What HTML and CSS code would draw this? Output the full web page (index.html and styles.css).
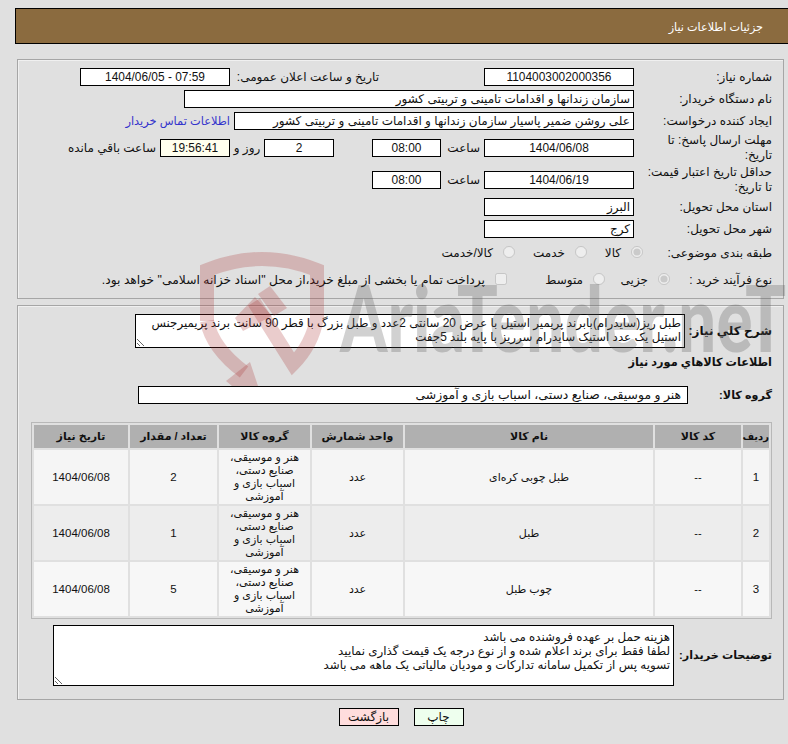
FILE: index.html
```html
<!DOCTYPE html>
<html lang="fa" dir="rtl">
<head>
<meta charset="utf-8">
<title>جزئیات اطلاعات نیاز</title>
<link rel="stylesheet" href="styles.css">
</head>
<body>
<header class="title-bar">جزئیات اطلاعات نیاز</header>

<section class="panel panel-top">
  <div class="row">
    <span class="label">شماره نیاز:</span>
    <span class="box w150 center">1104003002000356</span>
    <span class="label-public">تاریخ و ساعت اعلان عمومی:</span>
    <span class="box w150 center ltr">1404/06/05 - 07:59</span>
  </div>
  <div class="row">
    <span class="label">نام دستگاه خریدار:</span>
    <span class="box w450">سازمان زندانها و اقدامات تامینی و تربیتی کشور</span>
  </div>
  <div class="row">
    <span class="label">ایجاد کننده درخواست:</span>
    <span class="box w400">علی روشن ضمیر پاسیار سازمان زندانها و اقدامات تامینی و تربیتی کشور</span>
    <a class="contact" href="#">اطلاعات تماس خریدار</a>
  </div>
  <div class="row tall">
    <span class="label">مهلت ارسال پاسخ: تا تاریخ:</span>
    <span class="box w150 center">1404/06/08</span>
    <span class="hour">ساعت</span>
    <span class="box w69 center">08:00</span>
    <span class="spacer"></span>
    <span class="box w70 center">2</span>
    <span class="days">روز و</span>
    <span class="box w70 center timer">19:56:41</span>
    <span class="left-note">ساعت باقي مانده</span>
  </div>
  <div class="row tall">
    <span class="label">حداقل تاریخ اعتبار قیمت: تا تاریخ:</span>
    <span class="box w150 center">1404/06/19</span>
    <span class="hour">ساعت</span>
    <span class="box w69 center">08:00</span>
  </div>
  <div class="row">
    <span class="label">استان محل تحویل:</span>
    <span class="box w150">البرز</span>
  </div>
  <div class="row">
    <span class="label">شهر محل تحویل:</span>
    <span class="box w150">کرج</span>
  </div>
  <div class="row choice choice-subject">
    <span class="label">طبقه بندی موضوعی:</span>
    <label class="opt opt-goods"><input type="radio" name="subject" checked disabled><span>کالا</span></label>
    <label class="opt opt-service"><input type="radio" name="subject" disabled><span>خدمت</span></label>
    <label class="opt"><input type="radio" name="subject" disabled><span>کالا/خدمت</span></label>
  </div>
  <div class="row choice choice-process">
    <span class="label">نوع فرآیند خرید :</span>
    <label class="opt opt-minor"><input type="radio" name="process" checked disabled><span>جزیی</span></label>
    <label class="opt opt-medium"><input type="radio" name="process" disabled><span>متوسط</span></label>
    <label class="opt"><input type="checkbox" disabled><span class="pay-note">پرداخت تمام یا بخشی از مبلغ خرید،از محل "اسناد خزانه اسلامی" خواهد بود.</span></label>
  </div>
</section>

<section class="panel panel-bottom">
  <div class="row desc-row">
    <span class="label strong">شرح کلي نیاز:</span>
    <textarea class="area area-desc" readonly>طبل ریز(سایدرام)بابرند پریمیر استیل با عرض 20 سانتی 2عدد و طبل بزرگ با قطر 90 سانت برند پریمیرجنس استیل یک عدد استیک سایدرام سرریز با پایه بلند 5جفت</textarea>
  </div>
  <h2 class="goods-title">اطلاعات کالاهاي مورد نیاز</h2>
  <div class="row group-row">
    <span class="label strong">گروه کالا:</span>
    <span class="box w550">هنر و موسیقی، صنایع دستی، اسباب بازی و آموزشی</span>
  </div>
  <table class="goods">
    <colgroup>
      <col class="c-row"><col class="c-code"><col class="c-name"><col class="c-unit"><col class="c-group"><col class="c-qty"><col class="c-date">
    </colgroup>
    <thead>
      <tr><th class="th-row">ردیف</th><th>کد کالا</th><th>نام کالا</th><th>واحد شمارش</th><th>گروه کالا</th><th>تعداد / مقدار</th><th>تاریخ نیاز</th></tr>
    </thead>
    <tbody>
      <tr class="r1"><td class="num">1</td><td>--</td><td>طبل چوبی کره‌ای</td><td>عدد</td><td>هنر و موسیقی، صنایع دستی، اسباب بازی و آموزشی</td><td class="num">2</td><td class="num">1404/06/08</td></tr>
      <tr class="r2"><td class="num">2</td><td>--</td><td>طبل</td><td>عدد</td><td>هنر و موسیقی، صنایع دستی، اسباب بازی و آموزشی</td><td class="num">1</td><td class="num">1404/06/08</td></tr>
      <tr class="r3"><td class="num">3</td><td>--</td><td>چوب طبل</td><td>عدد</td><td>هنر و موسیقی، صنایع دستی، اسباب بازی و آموزشی</td><td class="num">5</td><td class="num">1404/06/08</td></tr>
    </tbody>
  </table>
  <div class="row notes-row">
    <span class="label strong">توضیحات خریدار:</span>
    <textarea class="area area-notes" readonly>هزینه حمل بر عهده فروشنده می باشد
لطفا فقط برای برند اعلام شده و از نوع درجه یک قیمت گذاری نمایید
تسویه پس از تکمیل سامانه تدارکات و مودیان مالیاتی یک ماهه می باشد</textarea>
  </div>
</section>

<div class="actions">
  <button class="btn btn-print" type="button">چاپ</button>
  <button class="btn btn-back" type="button">بازگشت</button>
</div>

<svg class="watermark" width="598" height="146" viewBox="190 240 598 146" aria-hidden="true">
  <g fill="none" stroke="#a82a2a" stroke-opacity=".24" stroke-width="14">
    <path d="M207 321 V270 Q262 248 317 270 V318 Q312 345 293 364 L254 302"/>
    <path d="M207 321 Q212 348 244 372"/>
  </g>
  <g fill="#a82a2a" fill-opacity=".24">
    <path d="M226 381 L250 362 L258 386 H232 Z"/>
    <path d="M235 318 L255 297 L272 316 L243 331 Z"/>
    <path d="M258 294 L270 286 L287 308 L274 316 Z"/>
  </g>
  <text class="wm-text" x="340" y="352" textLength="446" lengthAdjust="spacingAndGlyphs">AriaTender.neT</text>
</svg>
</body>
</html>
```
FILE: styles.css
```css
* { box-sizing: border-box; }
html, body { margin: 0; padding: 0; height: 744px; overflow: hidden; }
body {
  position: relative;
  background: #e0e0e0;
  color: #111;
  font: 12px/14px "Liberation Sans", "DejaVu Sans", sans-serif;
}
.title-bar {
  height: 36px;
  margin: 8px 0 0 15px;
  padding-right: 25px;
  background: #8b6b3f;
  border: 1px solid #000;
  border-right: 0;
  color: #fff;
  font-size: 11.2px;
  line-height: 36px;
}
.panel {
  margin: 0 4px 0 17px;
  padding: 0 11px 0 12px;
  border: 1px solid #a6a6a6;
  box-shadow: inset 1px 1px 0 #f0f0f0;
  display: flex;
  flex-direction: column;
  gap: 4px;
}
.panel-top { height: 240px; margin-top: 15px; padding-top: 8px; }
.panel-bottom { height: 395px; margin-top: 6px; padding-top: 8px; gap: 0; }
.row { display: flex; align-items: center; min-height: 18px; }
.row.tall { height: 28px; }
.label { flex: 0 0 138px; padding-left: 12px; line-height: 15px; }
.strong { font-weight: bold; white-space: nowrap; padding-left: 0; }
.box {
  height: 18px;
  padding: 0 3px;
  background: #fff;
  border: 1px solid #000;
  line-height: 16px;
  white-space: nowrap;
  overflow: hidden;
}
.center { text-align: center; font-size: 11.9px; }
.ltr { direction: ltr; }
.w69 { width: 69px; }
.w70 { width: 70px; }
.w150 { width: 150px; }
.w400 { width: 400px; }
.w450 { width: 450px; }
.w550 { width: 550px; padding-right: 6px; font-size: 12.4px; }
.timer { background: #ffffee; }
.label-public { width: 254px; padding-right: 105px; white-space: nowrap; }
.contact { margin-right: 4px; color: #3333cc; font-size: 11.4px; text-decoration: none; white-space: nowrap; }
.hour { width: 43px; padding-right: 4px; }
.spacer { width: 38px; }
.days { width: 34px; text-align: center; }
.left-note { margin-right: 4px; white-space: nowrap; }
.choice { height: 22px; }
.choice-process { margin-top: 1px; }
.opt { display: flex; align-items: center; gap: 10px; white-space: nowrap; }
.opt input { margin: 0 0 3px; flex: none; width: 12px; height: 12px; }
.pay-note { font-size: 12.3px; }
.choice-subject .label { flex-basis: 129px; }
.choice-process .label { flex-basis: 102px; }
.opt-goods { width: 56px; }
.opt-service { width: 72px; }
.opt-minor { width: 65px; }
.opt-medium { width: 98px; }
.area {
  display: block;
  padding: 1px 3px;
  background: #fff;
  border: 1px solid #000;
  border-radius: 0;
  color: #111;
  font: 11.85px/14px "Liberation Sans", "DejaVu Sans", sans-serif;
  outline: 0;
  overflow: hidden;
}
.desc-row { height: 34px; }
.label.strong { flex-basis: 87px; }
.area-desc { width: 550px; height: 34px; }
.goods-title { margin: 7px 0 0; font-size: 11.3px; line-height: 14px; font-weight: bold; }
.group-row { margin-top: 17px; }
.group-row .label.strong { flex-basis: 84px; font-size: 11.2px; }
.goods {
  width: 741px;
  margin: 18px 0 0 0;
  table-layout: fixed;
  border-collapse: separate;
  border-spacing: 2px;
  border: 1px solid #b8b8b8;
  align-self: flex-start;
  font-size: 11px;
  line-height: 13px;
}
.c-row { width: 26px; }
.c-code { width: 86px; }
.c-name { width: 248px; }
.c-unit { width: 91px; }
.c-group { width: 91px; }
.c-qty { width: 87px; }
.c-date { width: 94px; }
.goods th { height: 23px; padding: 0; background: #b0b0b0; font-size: 11px; font-weight: bold; }
.goods .th-row { font-size: 10px; }
.goods td { height: 54px; padding: 0 2px; text-align: center; }
.goods .num { font-size: 11.5px; }
.r1 td { background: #f5f5f5; }
.r2 td { background: #ededed; }
.r3 td { background: #f7f7f7; }
.notes-row { margin-top: 6px; }
.notes-row .label.strong { flex-basis: 98px; font-size: 11.2px; }
.area-notes { width: 621px; height: 61px; padding-top: 4px; }
.actions { display: flex; justify-content: center; gap: 15px; margin-top: 8px; padding-left: 14px; width: 788px; }
.btn {
  height: 18px;
  padding: 0;
  border: 1px solid #000;
  color: #111;
  font: 12px/14px "Liberation Sans", "DejaVu Sans", sans-serif;
}
.btn-print { width: 50px; background: #eeffee; }
.btn-back { width: 60px; background: #ffdddd; }
.watermark { position: absolute; left: 190px; top: 240px; pointer-events: none; direction: ltr; }
.wm-text { direction: ltr; fill: #555; fill-opacity: .27; font: 900 92px "Lato", sans-serif; }
```
